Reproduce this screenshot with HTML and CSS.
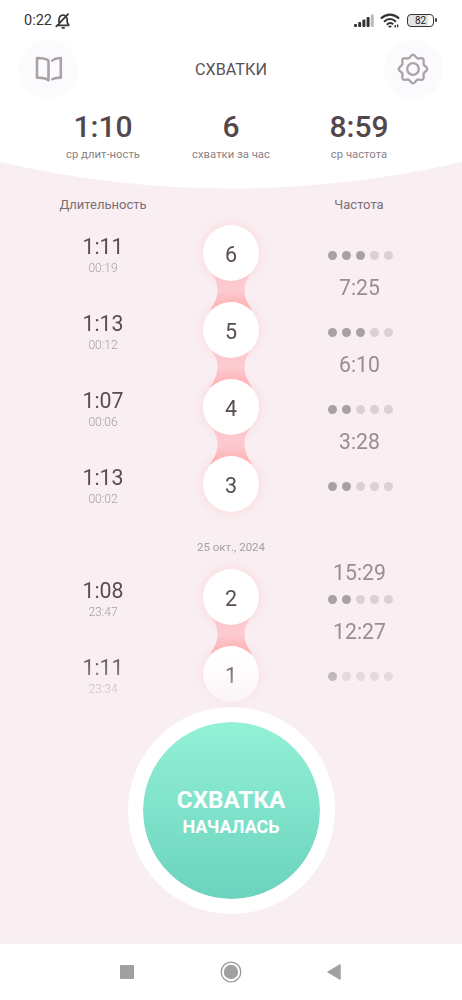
FILE: index.html
```html
<!DOCTYPE html>
<html lang="ru">
<head>
<meta charset="utf-8">
<title>Схватки</title>
<link rel="stylesheet" href="styles.css">
</head>
<body>
<div class="app">
  <header class="top">
    <svg class="curve" viewBox="0 0 462 190" preserveAspectRatio="none"><path d="M0 0H462V162Q231 215 0 162Z" fill="#fff"/></svg>
    <div class="status">
      <span class="clock">0:22</span>
      <svg class="bell" width="16" height="16" viewBox="0 0 16 16" fill="none" stroke="#373737" stroke-width="1.7"><path d="M3 12.4H14.4M4 12.2V6.5Q4.2 2.5 8 2Q11.8 2.5 12.2 6.5V9.5L14 12M6.6 14.9H9.8M.8 13.8L13.6 .6"/></svg>
      <svg class="signal" width="22" height="15" viewBox="0 0 22 15" fill="#333"><rect x="1" y="11" width="3" height="3" rx="1"/><rect x="5.2" y="9" width="3" height="5" rx="1"/><rect x="9.4" y="6.5" width="3" height="7.5" rx="1"/><rect x="13.6" y="4" width="3" height="10" rx="1"/><rect x="17.8" y="1.5" width="3" height="12.5" rx="1" fill="#bbb"/></svg>
      <svg class="wifi" width="21" height="16" viewBox="0 0 21 16" fill="none" stroke="#333" stroke-width="2"><path d="M.8 5.4Q10 -2.2 19.2 5.4M4 8.7Q10 3.3 16 8.7M6.8 11.7Q10 8.7 13.2 11.2"/><path d="M8 13L10 15L12 13Q10 11.8 8 13Z" fill="#333" stroke="none"/><path d="M15.2 14.6V12M17.6 11.4V14.2" stroke-width="1.4"/></svg>
      <div class="battery">82</div>
    </div>
    <div class="bar">
      <div class="round"><svg width="28" height="26" viewBox="0 0 28 26" fill="none" stroke="#aaa2a6" stroke-width="2.6" stroke-linejoin="round" stroke-linecap="round"><path d="M13.5 24.2Q9.5 21.4 2 21.6V2Q9.5 1.8 13.5 4.6ZM17.3 4.6Q20 2.2 25.8 2V21.6Q20.5 21.6 17.3 23.2"/></svg></div>
      <h1>СХВАТКИ</h1>
      <div class="round"><svg width="32" height="32" viewBox="-16 -16 32 32" fill="none" stroke="#aaa2a6" stroke-width="2.3" stroke-linejoin="round"><path d="M-2.8 -12.2Q0 -16.4 2.8 -12.2Q4.2 -10 6.7 -10.6Q11.6 -11.6 10.6 -6.7Q10 -4.2 12.2 -2.8Q16.4 0 12.2 2.8Q10 4.2 10.6 6.7Q11.6 11.6 6.7 10.6Q4.2 10 2.8 12.2Q0 16.4 -2.8 12.2Q-4.2 10 -6.7 10.6Q-11.6 11.6 -10.6 6.7Q-10 4.2 -12.2 2.8Q-16.4 0 -12.2 -2.8Q-10 -4.2 -10.6 -6.7Q-11.6 -11.6 -6.7 -10.6Q-4.2 -10 -2.8 -12.2Z"/><circle r="5.8"/></svg></div>
    </div>
    <div class="stats">
      <div><b>1:10</b><span>ср длит-ность</span></div>
      <div><b>6</b><span>схватки за час</span></div>
      <div><b>8:59</b><span>ср частота</span></div>
    </div>
  </header>

  <div class="heads"><span>Длительность</span><span></span><span>Частота</span></div>

  <main class="list">
    <div class="row">
      <div class="dur"><b>1:11</b><span>00:19</span></div>
      <div class="link"><div class="node">6</div><svg class="neck" viewBox="0 0 44 36"><path d="M3 0H41Q29 17 43 36H1Q15 17 3 0Z" fill="url(#pink)"/></svg></div>
      <div class="freq"><i></i><p class="dots"><i class="on"></i><i class="on"></i><i class="on"></i><i></i><i></i></p><span>7:25</span></div>
    </div>
    <div class="row">
      <div class="dur"><b>1:13</b><span>00:12</span></div>
      <div class="link"><div class="node">5</div><svg class="neck" viewBox="0 0 44 36"><path d="M3 0H41Q29 17 43 36H1Q15 17 3 0Z" fill="url(#pink)"/></svg></div>
      <div class="freq"><i></i><p class="dots"><i class="on"></i><i class="on"></i><i class="on"></i><i></i><i></i></p><span>6:10</span></div>
    </div>
    <div class="row">
      <div class="dur"><b>1:07</b><span>00:06</span></div>
      <div class="link"><div class="node">4</div><svg class="neck" viewBox="0 0 44 36"><path d="M3 0H41Q29 17 43 36H1Q15 17 3 0Z" fill="url(#pink)"/></svg></div>
      <div class="freq"><i></i><p class="dots"><i class="on"></i><i class="on"></i><i></i><i></i><i></i></p><span>3:28</span></div>
    </div>
    <div class="row">
      <div class="dur"><b>1:13</b><span>00:02</span></div>
      <div class="link"><div class="node">3</div></div>
      <div class="freq"><i></i><p class="dots"><i class="on"></i><i class="on"></i><i></i><i></i><i></i></p></div>
    </div>
    <div class="date">25 окт., 2024</div>
    <div class="row">
      <div class="dur"><b>1:08</b><span>23:47</span></div>
      <div class="link"><div class="node">2</div><svg class="neck" viewBox="0 0 44 36"><path d="M3 0H41Q29 17 43 36H1Q15 17 3 0Z" fill="url(#pink)"/></svg></div>
      <div class="freq"><span>15:29</span><p class="dots"><i class="on"></i><i class="on"></i><i></i><i></i><i></i></p><span>12:27</span></div>
    </div>
    <div class="row">
      <div class="dur"><b>1:11</b><span>23:34</span></div>
      <div class="link"><div class="node">1</div></div>
      <div class="freq"><i></i><p class="dots"><i class="on"></i><i></i><i></i><i></i><i></i></p></div>
    </div>
  </main>

  <div class="action"><button class="start"><b>СХВАТКА</b><span>НАЧАЛАСЬ</span></button></div>

  <nav class="nav">
    <svg width="22" height="22" viewBox="0 0 22 22"><rect x="4" y="4" width="14" height="14" rx=".8" fill="#a0a0a0"/></svg>
    <svg width="22" height="22" viewBox="0 0 22 22"><circle cx="11" cy="11" r="9.8" fill="none" stroke="#999" stroke-width="1.3"/><circle cx="11" cy="11" r="7.2" fill="#a0a0a0"/></svg>
    <svg width="22" height="22" viewBox="0 0 22 22"><path d="M4.6 11L17.2 3.6V18.4Z" fill="#a0a0a0" stroke="#a0a0a0" stroke-linejoin="round"/></svg>
  </nav>
</div>
<svg class="defs" width="0" height="0"><defs><linearGradient id="pink" x1="0" y1="0" x2="0" y2="1"><stop offset=".1" stop-color="#fdc9d2"/><stop offset=".45" stop-color="#fccbd2"/><stop offset=".85" stop-color="#fdb6b9"/></linearGradient></defs></svg>
</body>
</html>
```
FILE: styles.css
```css
* { box-sizing: border-box; margin: 0; padding: 0; }
body { background: #f9eef2; font-family: Roboto, sans-serif; color: #4a4045; overflow: hidden; }
.app { width: 462px; height: 1000px; display: flex; flex-direction: column; }
.defs { position: absolute; }

.top { position: relative; height: 190px; flex: none; }
.curve { position: absolute; left: 0; top: 0; width: 462px; height: 190px; z-index: -1; }
.status { height: 40px; display: flex; align-items: center; padding: 1px 26px 0 24px; }
.clock { font-size: 14.5px; color: #333; width: 31px; white-space: nowrap; }
.signal { margin-left: auto; }
.wifi { margin: 0 6px 0 5px; }
.battery { position: relative; width: 27px; height: 13px; border: 1.5px solid #333; border-radius: 4px; background: linear-gradient(90deg, #e4e4e4 82%, #fff 82%); font-size: 10px; line-height: 11px; text-align: center; color: #222; margin-right: 2px; }
.battery::after { content: ""; position: absolute; right: -3.5px; top: 3px; width: 2px; height: 4px; background: #444; border-radius: 1px; }

.bar { display: flex; justify-content: space-between; align-items: center; padding: 0 19px; height: 58px; }
.round { width: 59px; height: 59px; border-radius: 50%; background: #fbfbfe; display: flex; align-items: center; justify-content: center; }
.bar h1 { font-size: 16.2px; line-height: 20px; padding-top: 2px; font-weight: 400; color: #5a5256; }

.stats, .heads, .row { display: grid; grid-template-columns: 128px 128px 128px; justify-content: center; text-align: center; }
.stats { padding-top: 10px; }
.stats b { display: block; font-size: 30px; line-height: 38px; font-weight: 500; color: #54474c; }
.stats span { display: block; font-size: 11.3px; line-height: 17px; color: #8a8185; }

.heads { height: 25px; line-height: 30px; font-size: 13px; color: #7a6f74; }

.list { flex: none; -webkit-mask-image: linear-gradient(#000 437px, rgba(0,0,0,.4) 487px); mask-image: linear-gradient(#000 437px, rgba(0,0,0,.4) 487px); height: 494px; }
.row { height: 77px; }
.dur { padding-top: 19px; }
.dur b { display: block; font-size: 21.3px; line-height: 26px; font-weight: 400; color: #584d52; }
.dur span { display: block; font-size: 12px; line-height: 17px; font-weight: 300; color: #a69da2; }
.link { display: flex; flex-direction: column; align-items: center; padding-top: 10px; }
.node { position: relative; z-index: 1; flex: none; width: 56px; height: 56px; border-radius: 50%; background: #fff; box-shadow: 0 0 9px 1px rgba(255, 190, 180, .4); font-size: 21.5px; line-height: 59px; color: #584d52; }
.neck { flex: none; width: 44px; height: 36px; margin-top: -7px; }
.freq { display: grid; grid-template-rows: 26px 29px 34px; align-items: center; height: 89px; font-size: 21.2px; color: #988d92; padding-left: 1px; }
.dots { display: flex; justify-content: center; gap: 5px; padding-left: 2px; }
.dots i { width: 9px; height: 9px; border-radius: 50%; background: #dbd0d6; }
.dots .on { background: #a99fa5; }
.date { height: 36px; line-height: 48px; text-align: center; font-size: 11.5px; color: #a79ea2; }

.action { display: flex; justify-content: center; height: 237px; flex: none; padding-top: 1px; margin-top: -3px; }
.start { width: 207px; height: 207px; border: 15.5px solid #fff; border-radius: 50%; background: linear-gradient(#93f1d6, #6bd3be) padding-box; display: flex; flex-direction: column; align-items: center; justify-content: center; padding-top: 2px; color: #fff; font-family: inherit; }
.start b { font-size: 24.2px; line-height: 29px; font-weight: 700; }
.start span { font-size: 18px; line-height: 23px; font-weight: 700; }

.nav { flex: 1; background: #fff; border-top: 1px solid #f4f0f2; display: flex; justify-content: center; gap: 81.5px; align-items: center; padding-right: 1px; }
```
